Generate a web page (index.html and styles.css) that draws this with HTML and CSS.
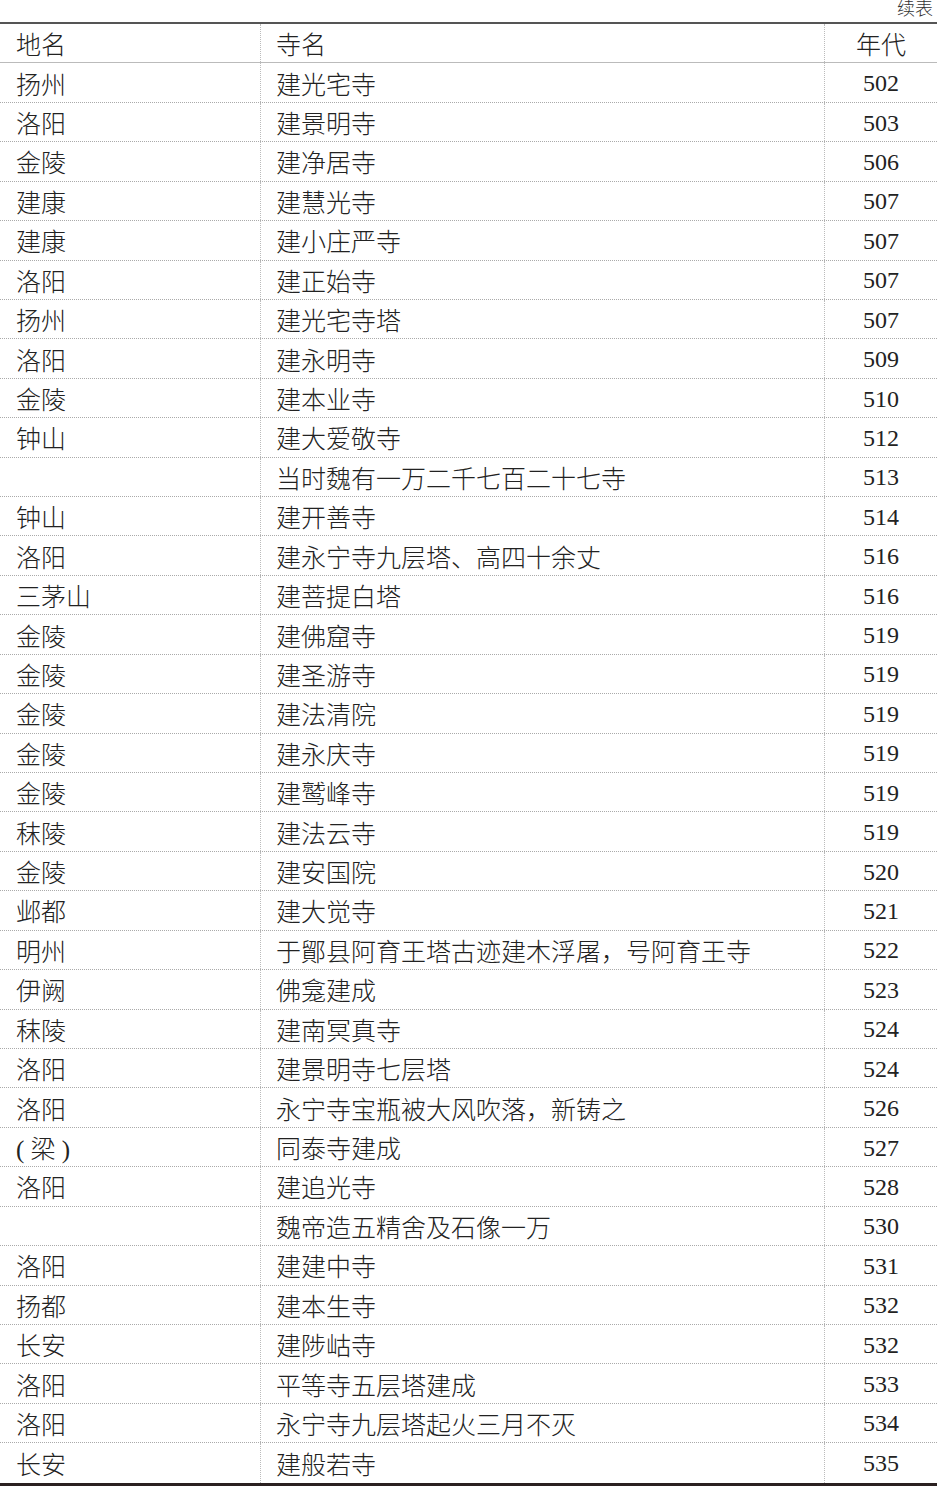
FILE: index.html
```html
<!DOCTYPE html>
<html lang="zh-CN">
<head>
<meta charset="utf-8">
<title>续表</title>
<link rel="stylesheet" href="styles.css">
</head>
<body>
<div class="caption">续表</div>
<div class="table">
  <div class="row head"><div class="c1">地名</div><div class="c2">寺名</div><div class="c3 cjk">年代</div></div>
  <div class="row"><div class="c1">扬州</div><div class="c2">建光宅寺</div><div class="c3">502</div></div>
  <div class="row"><div class="c1">洛阳</div><div class="c2">建景明寺</div><div class="c3">503</div></div>
  <div class="row"><div class="c1">金陵</div><div class="c2">建净居寺</div><div class="c3">506</div></div>
  <div class="row"><div class="c1">建康</div><div class="c2">建慧光寺</div><div class="c3">507</div></div>
  <div class="row"><div class="c1">建康</div><div class="c2">建小庄严寺</div><div class="c3">507</div></div>
  <div class="row"><div class="c1">洛阳</div><div class="c2">建正始寺</div><div class="c3">507</div></div>
  <div class="row"><div class="c1">扬州</div><div class="c2">建光宅寺塔</div><div class="c3">507</div></div>
  <div class="row"><div class="c1">洛阳</div><div class="c2">建永明寺</div><div class="c3">509</div></div>
  <div class="row"><div class="c1">金陵</div><div class="c2">建本业寺</div><div class="c3">510</div></div>
  <div class="row"><div class="c1">钟山</div><div class="c2">建大爱敬寺</div><div class="c3">512</div></div>
  <div class="row"><div class="c1"></div><div class="c2">当时魏有一万二千七百二十七寺</div><div class="c3">513</div></div>
  <div class="row"><div class="c1">钟山</div><div class="c2">建开善寺</div><div class="c3">514</div></div>
  <div class="row"><div class="c1">洛阳</div><div class="c2">建永宁寺九层塔、高四十余丈</div><div class="c3">516</div></div>
  <div class="row"><div class="c1">三茅山</div><div class="c2">建菩提白塔</div><div class="c3">516</div></div>
  <div class="row"><div class="c1">金陵</div><div class="c2">建佛窟寺</div><div class="c3">519</div></div>
  <div class="row"><div class="c1">金陵</div><div class="c2">建圣游寺</div><div class="c3">519</div></div>
  <div class="row"><div class="c1">金陵</div><div class="c2">建法清院</div><div class="c3">519</div></div>
  <div class="row"><div class="c1">金陵</div><div class="c2">建永庆寺</div><div class="c3">519</div></div>
  <div class="row"><div class="c1">金陵</div><div class="c2">建鹫峰寺</div><div class="c3">519</div></div>
  <div class="row"><div class="c1">秣陵</div><div class="c2">建法云寺</div><div class="c3">519</div></div>
  <div class="row"><div class="c1">金陵</div><div class="c2">建安国院</div><div class="c3">520</div></div>
  <div class="row"><div class="c1">邺都</div><div class="c2">建大觉寺</div><div class="c3">521</div></div>
  <div class="row"><div class="c1">明州</div><div class="c2">于鄮县阿育王塔古迹建木浮屠，号阿育王寺</div><div class="c3">522</div></div>
  <div class="row"><div class="c1">伊阙</div><div class="c2">佛龛建成</div><div class="c3">523</div></div>
  <div class="row"><div class="c1">秣陵</div><div class="c2">建南冥真寺</div><div class="c3">524</div></div>
  <div class="row"><div class="c1">洛阳</div><div class="c2">建景明寺七层塔</div><div class="c3">524</div></div>
  <div class="row"><div class="c1">洛阳</div><div class="c2">永宁寺宝瓶被大风吹落，新铸之</div><div class="c3">526</div></div>
  <div class="row"><div class="c1">( 梁 )</div><div class="c2">同泰寺建成</div><div class="c3">527</div></div>
  <div class="row"><div class="c1">洛阳</div><div class="c2">建追光寺</div><div class="c3">528</div></div>
  <div class="row"><div class="c1"></div><div class="c2">魏帝造五精舍及石像一万</div><div class="c3">530</div></div>
  <div class="row"><div class="c1">洛阳</div><div class="c2">建建中寺</div><div class="c3">531</div></div>
  <div class="row"><div class="c1">扬都</div><div class="c2">建本生寺</div><div class="c3">532</div></div>
  <div class="row"><div class="c1">长安</div><div class="c2">建陟岵寺</div><div class="c3">532</div></div>
  <div class="row"><div class="c1">洛阳</div><div class="c2">平等寺五层塔建成</div><div class="c3">533</div></div>
  <div class="row"><div class="c1">洛阳</div><div class="c2">永宁寺九层塔起火三月不灭</div><div class="c3">534</div></div>
  <div class="row last"><div class="c1">长安</div><div class="c2">建般若寺</div><div class="c3">535</div></div>
</div>
</body>
</html>
```
FILE: styles.css
```css
html, body {
  margin: 0;
  padding: 0;
  background: #fff;
}
body {
  width: 937px;
  color: #222;
  font-family: "Liberation Serif", "Noto Sans CJK SC", serif;
}
.caption {
  height: 22px;
  font-size: 18px;
  line-height: 18px;
  text-align: right;
  padding-right: 4px;
  color: #333;
  font-weight: 300;
}
.table {
  border-top: 2px solid #555;
  border-bottom: 3px solid #2a2020;
}
.row {
  display: grid;
  grid-template-columns: 261px 564px 112px;
  height: 39.43px;
  box-sizing: border-box;
  border-bottom: 1px dotted #aaa;
  font-size: 25px;
  font-weight: 300;
}
.row.head {
  border-bottom: 1px solid #bbb;
}
.row.last {
  border-bottom: none;
}
.c1, .c2, .c3 {
  display: flex;
  align-items: center;
  white-space: nowrap;
}
.c1 {
  padding-left: 16px;
  border-right: 1px dotted #bbb;
}
.c2 {
  padding-left: 15px;
  border-right: 1px dotted #bbb;
}
.c3 {
  justify-content: center;
  font-size: 24px;
  padding-top: 2px;
}
.c3.cjk {
  font-size: 25px;
  padding-top: 0;
}
```
